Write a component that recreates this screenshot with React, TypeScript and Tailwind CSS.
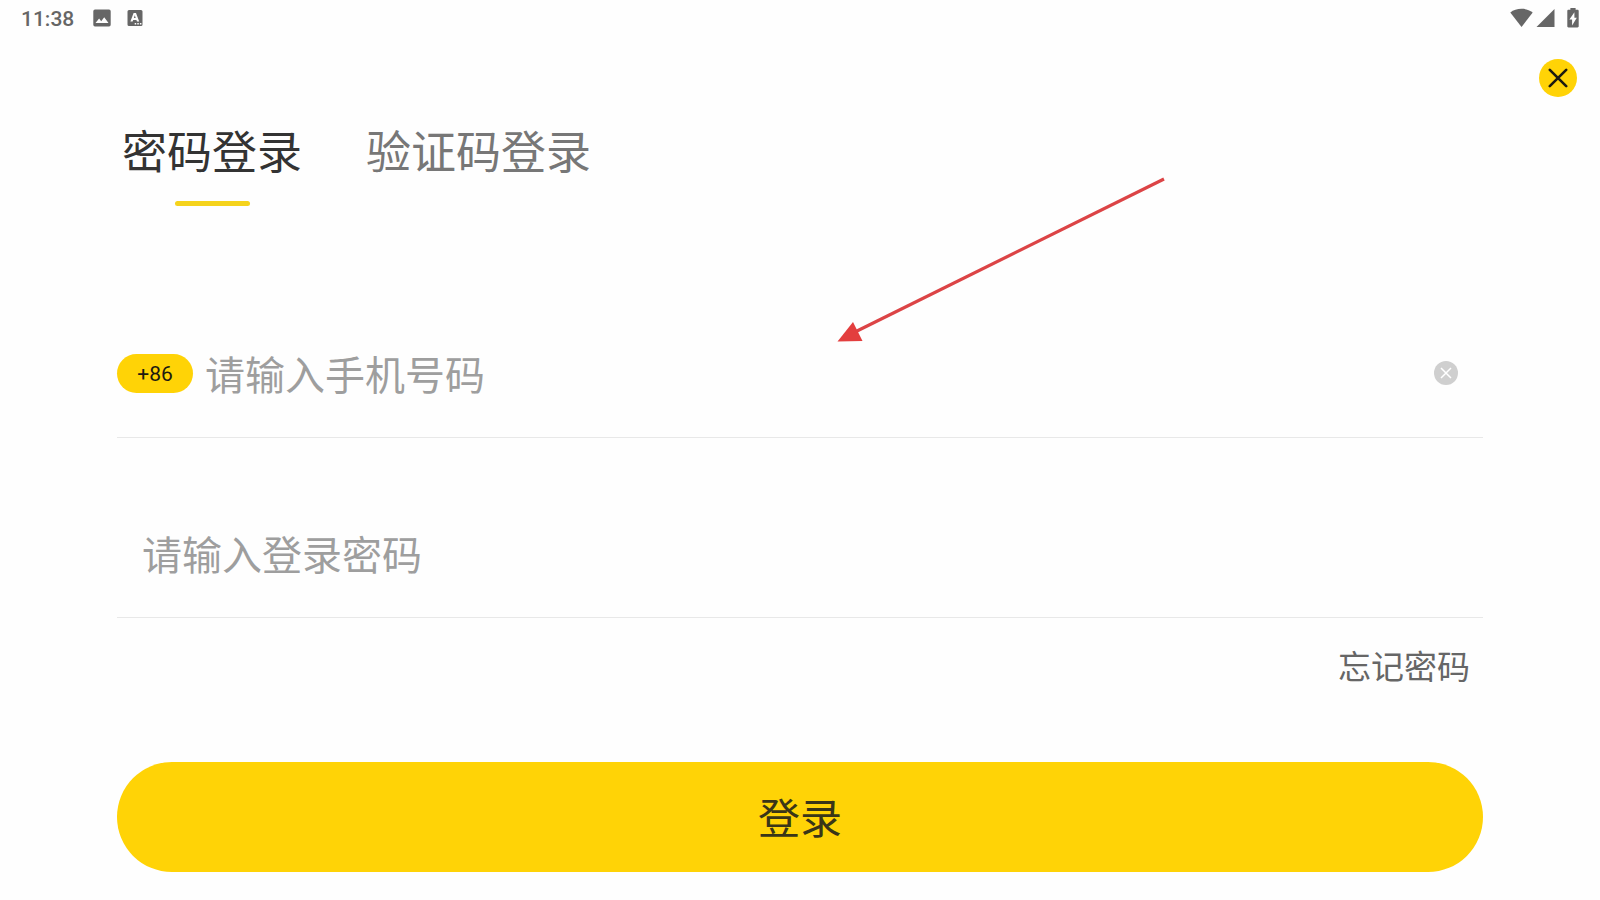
import { useState } from "react"

const tabs = ["密码登录", "验证码登录"]

function StatusBar() {
  return (
    <header className="flex h-9 items-center justify-between pl-[21px] pr-[21px] text-[#666666]">
      <div className="flex items-center">
        <span className="pt-0.5 text-[21px] leading-6 font-medium font-['Roboto',sans-serif]">11:38</span>
        <svg className="ml-[19px]" width="18" height="18" viewBox="0 0 18 18" fill="currentColor" aria-hidden="true">
          <path
            fillRule="evenodd"
            d="M2 0.5h14a1.7 1.7 0 0 1 1.7 1.7v13.6a1.7 1.7 0 0 1-1.7 1.7H2a1.7 1.7 0 0 1-1.7-1.7V2.2A1.7 1.7 0 0 1 2 .5zM2.5 14h13l-4.3-5.8-3 4-2.1-2.6z"
          />
        </svg>
        <svg className="ml-4" width="16" height="18" viewBox="0 0 16 18" fill="currentColor" aria-hidden="true">
          <path
            fillRule="evenodd"
            d="M2 1h12a1.5 1.5 0 0 1 1.5 1.5v13A1.5 1.5 0 0 1 14 17H2a1.5 1.5 0 0 1-1.5-1.5v-13A1.5 1.5 0 0 1 2 1zM6.6 4 3.4 12.6h2.200l.6-1.700h3.200l.6 1.700h2.200L9 4zM7.800 6.300l.9 2.800H6.900zM7.700 14v1.500h1.500V14zM10.300 14v1.500h1.500V14zM12.900 14v1.500h1.500V14z"
          />
        </svg>
      </div>
      <div className="flex items-center">
        <svg width="23" height="20" viewBox="0 0 23 20" fill="currentColor" aria-hidden="true">
          <path d="M0.3 4.4C3.4 2 7.2.8 11.5.8s8.100 1.200 11.200 3.600L11.500 19z" />
        </svg>
        <svg className="ml-[3px]" width="19" height="20" viewBox="0 0 19 20" fill="currentColor" aria-hidden="true">
          <path d="M18.500 1v18H.5z" />
        </svg>
        <svg className="ml-3" width="12" height="20" viewBox="0 0 12 20" fill="currentColor" aria-hidden="true">
          <path
            fillRule="evenodd"
            d="M3.400 0h5.200v1.700h1.900c.7 0 1.200.5 1.200 1.200v15.400c0 .7-.5 1.200-1.200 1.200H1.500C.8 19.500.3 19 .3 18.300V2.900c0-.7.5-1.200 1.200-1.200h1.900zM7.400 4.200l-5 7.400h2.700v5.800l4.700-7.700H7.400z"
          />
        </svg>
      </div>
    </header>
  )
}

// Pointer to the phone number field
function Arrow() {
  return (
    <svg
      className="pointer-events-none absolute left-[836px] top-[176px]"
      width="332"
      height="170"
      viewBox="0 0 332 170"
      aria-hidden="true"
    >
      <path d="M20 155.500 328 3" stroke="#dc4446" strokeWidth="3.200" />
      <path d="M1.500 165.500 17 146l9.500 19z" fill="#e33e3e" />
    </svg>
  )
}

export default function App() {
  const [tab, setTab] = useState(0)
  const [phone, setPhone] = useState("")
  const [password, setPassword] = useState("")

  return (
    <div className="relative min-h-screen bg-[#fefefe] font-['Noto_Sans_CJK_SC',sans-serif]">
      <StatusBar />

      <div className="flex justify-end pt-[23px] pr-[23px]">
        <button
          type="button"
          aria-label="关闭"
          className="flex size-[38px] items-center justify-center rounded-full bg-[#ffd306] text-[#1c1a10]"
        >
          <svg width="20" height="20" viewBox="0 0 20 20" stroke="currentColor" strokeWidth="2.600" strokeLinecap="round">
            <path d="M1.800 1.800 18.200 18.200M18.200 1.800 1.800 18.200" />
          </svg>
        </button>
      </div>

      <main className="px-[117px]">
        <div role="tablist" className="flex gap-16 pl-[5px] pt-[27px]">
          {tabs.map((name, i) => (
            <button
              key={name}
              type="button"
              role="tab"
              aria-selected={tab === i}
              onClick={() => setTab(i)}
              className={`flex flex-col items-center gap-[25px] text-[45px] leading-[52px] ${
                tab === i ? "text-[#333333]" : "text-[#777777]"
              }`}
            >
              {name}
              <span className={`h-[5px] w-[75px] rounded-full ${tab === i ? "bg-[#f5d31c]" : "bg-transparent"}`} />
            </button>
          ))}
        </div>

        <form onSubmit={(e) => e.preventDefault()} className="flex flex-col pt-[103px]">
          <div className="flex h-[129px] items-center border-b border-[#e8e8e8] pr-[25px]">
            <button
              type="button"
              className="h-[39px] w-[76px] shrink-0 rounded-full bg-[#ffd306] pt-[3px] font-['Roboto',sans-serif] text-[21px] text-[#1c1a10]"
            >
              +86
            </button>
            <input
              type="tel"
              aria-label="手机号码"
              placeholder="请输入手机号码"
              value={phone}
              onChange={(e) => setPhone(e.target.value)}
              className="h-16 min-w-0 flex-1 pl-3 text-[40px] text-[#333333] outline-none placeholder:text-[#9e9e9e]"
            />
            <button
              type="button"
              aria-label="清除"
              onClick={() => setPhone("")}
              className="flex size-6 items-center justify-center rounded-full bg-[#cfcfcf] text-white"
            >
              <svg width="12" height="12" viewBox="0 0 12 12" stroke="currentColor" strokeWidth="1.500">
                <path d="M1 1l10 10M11 1 1 11" />
              </svg>
            </button>
          </div>

          <div className="mt-[51px] flex h-[129px] items-center border-b border-[#e8e8e8]">
            <input
              type="password"
              aria-label="登录密码"
              placeholder="请输入登录密码"
              value={password}
              onChange={(e) => setPassword(e.target.value)}
              className="h-16 min-w-0 flex-1 pl-[25px] text-[40px] text-[#333333] outline-none placeholder:text-[#9e9e9e]"
            />
          </div>

          <a href="#forgot" className="mt-6 mr-[13px] self-end text-[33px] leading-[46px] text-[#666666]">
            忘记密码
          </a>

          <button
            type="submit"
            className="mt-[74px] h-[110px] w-full rounded-full bg-[#ffd306] pb-1 text-[42px] text-[#3a3618]"
          >
            登录
          </button>
        </form>
      </main>

      <Arrow />
    </div>
  )
}
